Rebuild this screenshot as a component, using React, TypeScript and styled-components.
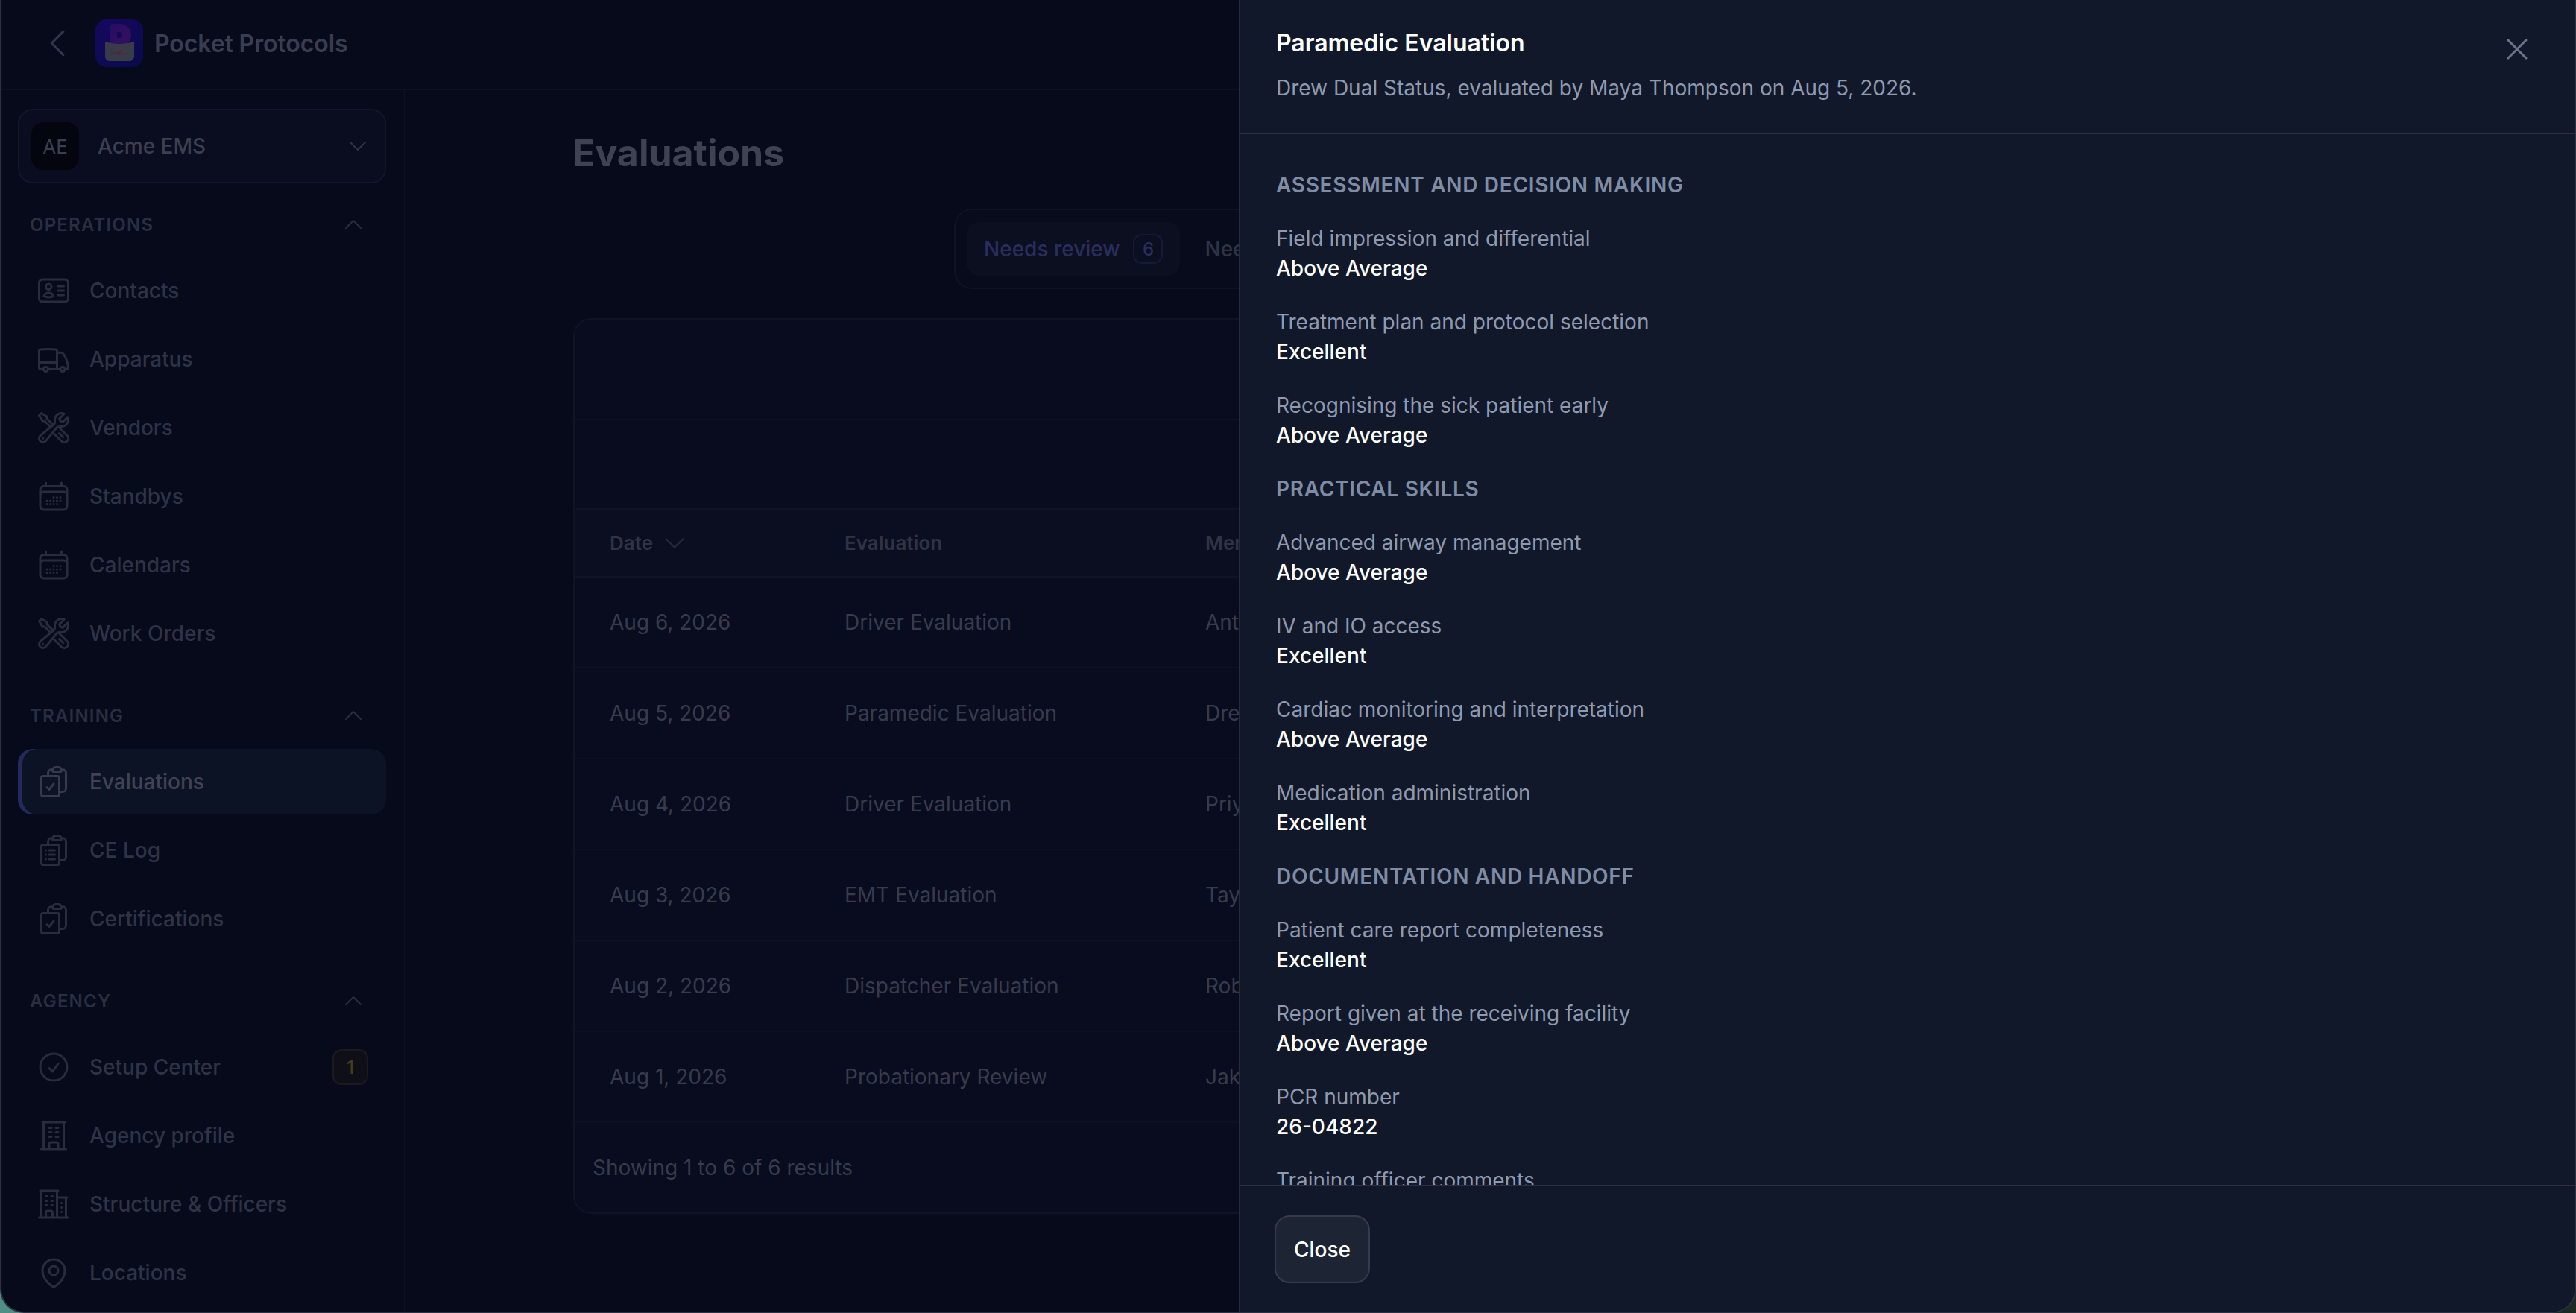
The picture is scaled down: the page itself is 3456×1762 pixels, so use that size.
import React from "react";
import styled, { createGlobalStyle } from "styled-components";
import {
  HiOutlineBuildingOffice,
  HiOutlineBuildingOffice2,
  HiOutlineCalendarDays,
  HiOutlineCheckCircle,
  HiOutlineChevronDown,
  HiOutlineChevronLeft,
  HiOutlineChevronUp,
  HiOutlineClipboardDocumentCheck,
  HiOutlineClipboardDocumentList,
  HiOutlineIdentification,
  HiOutlineMapPin,
  HiOutlineTruck,
  HiOutlineWrenchScrewdriver,
  HiOutlineXMark,
} from "react-icons/hi2";

const GlobalStyle = createGlobalStyle`
  html, body {
    margin: 0;
    padding: 0;
    background: linear-gradient(90deg, #4f8f84 0, #1c2a24 100%);
  }
  * { box-sizing: border-box; }
`;

const Window = styled.div`
  position: relative;
  width: 3456px;
  height: 1762px;
  display: flex;
  flex-direction: column;
  overflow: hidden;
  background: #060a1b;
  border: 2px solid #2d3144;
  border-top: none;
  border-radius: 0 0 32px 32px;
  font-family: Inter, "Liberation Sans", sans-serif;
`;

const TopBar = styled.header`
  height: 121px;
  flex: none;
  display: flex;
  align-items: center;
  padding: 0 0 3px 50px;
  border-bottom: 2px solid #0d1122;
`;
const BackIcon = styled(HiOutlineChevronLeft)`
  width: 50px;
  height: 50px;
  color: #32364a;
`;
const Logo = styled.svg`
  width: 64px;
  height: 64px;
  margin-left: 26px;
  flex: none;
`;
const Brand = styled.span`
  margin-left: 15px;
  font-size: 32px;
  font-weight: 600;
  letter-spacing: -0.1px;
  color: #3a3d4f;
`;

const Body = styled.div`
  flex: 1;
  display: flex;
  min-height: 0;
`;

const Sidebar = styled.aside`
  width: 542px;
  flex: none;
  padding: 25px 24px 0 22px;
  border-right: 2px solid #0d1122;
  overflow: hidden;
`;
const Tenant = styled.div`
  height: 100px;
  display: flex;
  align-items: center;
  padding: 0 20px 0 16px;
  border: 2px solid #12172a;
  border-radius: 20px;
  background: #090d1f;
`;
const TenantAvatar = styled.div`
  width: 64px;
  height: 64px;
  display: flex;
  align-items: center;
  justify-content: center;
  border-radius: 16px;
  background: #03050f;
  color: #3c3f50;
  font-size: 26px;
`;
const TenantName = styled.span`
  flex: 1;
  margin-left: 25px;
  font-size: 28px;
  font-weight: 500;
  color: #3c3f50;
`;
const TenantChevron = styled(HiOutlineChevronDown)`
  width: 32px;
  height: 32px;
  color: #2f3345;
`;
const Group = styled.section`
  margin-top: 48px;
  &:first-of-type { margin-top: 37px; }
`;
const GroupHead = styled.div`
  height: 36px;
  display: flex;
  align-items: center;
  justify-content: space-between;
  padding: 0 28px 0 16px;
  margin-bottom: 27px;
  font-size: 24px;
  font-weight: 600;
  letter-spacing: 1.2px;
  color: #2a2e40;
`;
const GroupChevron = styled(HiOutlineChevronUp)`
  width: 32px;
  height: 32px;
  color: #2a2e40;
`;
const NavList = styled.nav`
  display: flex;
  flex-direction: column;
  gap: 4px;
`;
const NavItem = styled.a<{ $active?: boolean }>`
  height: 88px;
  display: flex;
  align-items: center;
  gap: 24px;
  padding: 0 24px 0 24px;
  border-radius: 20px;
  font-size: 28px;
  font-weight: 500;
  color: ${(p) => (p.$active ? "#3f4354" : "#2f3345")};
  background: ${(p) => (p.$active ? "#0c1324" : "transparent")};
  box-shadow: ${(p) => (p.$active ? "inset 6px 0 0 #252a5c" : "none")};
  svg {
    width: 48px;
    height: 48px;
    flex: none;
    color: ${(p) => (p.$active ? "#363a4b" : "#282c3d")};
  }
`;
const NavLabel = styled.span`
  flex: 1;
`;
const NavBadge = styled.span`
  width: 48px;
  height: 48px;
  display: flex;
  align-items: center;
  justify-content: center;
  border: 2px solid #1c1a1e;
  border-radius: 12px;
  background: #0e0f17;
  color: #4a3b1c;
  font-size: 24px;
  font-weight: 500;
`;

const Main = styled.main`
  flex: 1;
  min-width: 0;
  padding: 52px 225px 0;
`;
const Title = styled.h1`
  margin: 0 0 0 -1px;
  font-size: 50px;
  line-height: 64px;
  font-weight: 700;
  color: #3f4252;
`;
const TabBar = styled.div`
  width: 1438px;
  height: 108px;
  margin: 43px auto 39px;
  display: flex;
  align-items: center;
  gap: 10px;
  padding: 0 15px;
  border: 2px solid #0e1224;
  border-radius: 24px;
  background: #070b1c;
`;
const Tab = styled.div<{ $active?: boolean }>`
  height: 72px;
  display: flex;
  align-items: center;
  gap: 18px;
  padding: 0 23px;
  border-radius: 16px;
  font-size: 28px;
  font-weight: 500;
  color: ${(p) => (p.$active ? "#2b2e5c" : "#2f3344")};
  background: ${(p) => (p.$active ? "#0b0f20" : "transparent")};
`;
const TabCount = styled.span`
  width: 40px;
  height: 40px;
  display: flex;
  align-items: center;
  justify-content: center;
  border: 2px solid #15193a;
  border-radius: 12px;
  font-size: 24px;
`;
const Card = styled.div`
  border: 2px solid #0f1325;
  border-radius: 24px;
  background: #080c1e;
  overflow: hidden;
`;
const ToolbarRow = styled.div<{ $height: number }>`
  height: ${(p) => p.$height}px;
  border-bottom: 2px solid #0f1325;
`;
// the member column stops where the drawer covers the table
const rowGrid = `
  display: grid;
  grid-template-columns: 315px 484px 46px;
  align-items: center;
  padding-left: 47px;
  white-space: nowrap;
`;
const HeadRow = styled.div`
  ${rowGrid}
  height: 91px;
  background: #0a0e20;
  border-bottom: 2px solid #0f1325;
  font-size: 26px;
  font-weight: 600;
  color: #2f3344;
`;
const HeadCell = styled.div`
  display: flex;
  align-items: center;
  gap: 11px;
  overflow: hidden;
  svg {
    width: 36px;
    height: 36px;
    color: #242838;
  }
`;
const Row = styled.div`
  ${rowGrid}
  height: 122px;
  border-bottom: 2px solid #0c1022;
  font-size: 28px;
  color: #383b4c;
`;
const Cell = styled.div`
  overflow: hidden;
`;
const CardFooter = styled.div`
  height: 120px;
  display: flex;
  align-items: center;
  padding-left: 24px;
  font-size: 28px;
  color: #383b4c;
`;

const Drawer = styled.aside`
  position: absolute;
  top: 0;
  right: 0;
  bottom: 0;
  width: 1792px;
  display: flex;
  flex-direction: column;
  background: #111829;
  border-left: 2px solid #272c3d;
`;
const DrawerHead = styled.header`
  position: relative;
  height: 180px;
  flex: none;
  padding: 34px 48px 0;
  border-bottom: 2px solid #2a3040;
`;
const DrawerTitle = styled.h2`
  margin: 0;
  font-size: 32px;
  line-height: 48px;
  font-weight: 600;
  color: #fff;
`;
const DrawerDesc = styled.p`
  margin: 16px 0 0;
  font-size: 28px;
  line-height: 40px;
  color: #8f9ab0;
`;
const CloseX = styled(HiOutlineXMark)`
  position: absolute;
  top: 42px;
  right: 53px;
  width: 48px;
  height: 48px;
  color: #6b7588;
`;
const DrawerBody = styled.div`
  flex: 1;
  min-height: 0;
  overflow: hidden;
  padding: 48px 48px 0;
  display: flex;
  flex-direction: column;
  gap: 32px;
`;
const SectionHead = styled.h3`
  margin: 0;
  font-size: 28px;
  line-height: 40px;
  font-weight: 600;
  letter-spacing: 0.7px;
  text-transform: uppercase;
  color: #7f8ca5;
`;
const Field = styled.div`
  flex: none;
`;
const FieldLabel = styled.div`
  font-size: 28px;
  line-height: 40px;
  color: #8f9ab0;
`;
const FieldValue = styled.div`
  font-size: 28px;
  line-height: 40px;
  font-weight: 500;
  color: #fff;
`;
const DrawerFoot = styled.footer`
  height: 170px;
  flex: none;
  padding: 39px 46px 0;
  border-top: 2px solid #2a3040;
`;
const CloseButton = styled.button`
  height: 91px;
  padding: 0 24px;
  border: 2px solid #353b4c;
  border-radius: 20px;
  background: #1d2434;
  color: #fff;
  font-family: inherit;
  font-size: 28px;
  font-weight: 500;
`;

const navGroups = [
  {
    title: "OPERATIONS",
    items: [
      { label: "Contacts", icon: <HiOutlineIdentification /> },
      { label: "Apparatus", icon: <HiOutlineTruck /> },
      { label: "Vendors", icon: <HiOutlineWrenchScrewdriver /> },
      { label: "Standbys", icon: <HiOutlineCalendarDays /> },
      { label: "Calendars", icon: <HiOutlineCalendarDays /> },
      { label: "Work Orders", icon: <HiOutlineWrenchScrewdriver /> },
    ],
  },
  {
    title: "TRAINING",
    items: [
      { label: "Evaluations", icon: <HiOutlineClipboardDocumentCheck />, active: true },
      { label: "CE Log", icon: <HiOutlineClipboardDocumentList /> },
      { label: "Certifications", icon: <HiOutlineClipboardDocumentCheck /> },
    ],
  },
  {
    title: "AGENCY",
    items: [
      { label: "Setup Center", icon: <HiOutlineCheckCircle />, badge: "1" },
      { label: "Agency profile", icon: <HiOutlineBuildingOffice /> },
      { label: "Structure & Officers", icon: <HiOutlineBuildingOffice2 /> },
      { label: "Locations", icon: <HiOutlineMapPin /> },
    ],
  },
];

const rows = [
  ["Aug 6, 2026", "Driver Evaluation", "Ant"],
  ["Aug 5, 2026", "Paramedic Evaluation", "Drew"],
  ["Aug 4, 2026", "Driver Evaluation", "Priy"],
  ["Aug 3, 2026", "EMT Evaluation", "Tay"],
  ["Aug 2, 2026", "Dispatcher Evaluation", "Rob"],
  ["Aug 1, 2026", "Probationary Review", "Jak"],
];

type Entry = { section: string } | { label: string; value?: string };

const entries: Entry[] = [
  { section: "Assessment and decision making" },
  { label: "Field impression and differential", value: "Above Average" },
  { label: "Treatment plan and protocol selection", value: "Excellent" },
  { label: "Recognising the sick patient early", value: "Above Average" },
  { section: "Practical skills" },
  { label: "Advanced airway management", value: "Above Average" },
  { label: "IV and IO access", value: "Excellent" },
  { label: "Cardiac monitoring and interpretation", value: "Above Average" },
  { label: "Medication administration", value: "Excellent" },
  { section: "Documentation and handoff" },
  { label: "Patient care report completeness", value: "Excellent" },
  { label: "Report given at the receiving facility", value: "Above Average" },
  { label: "PCR number", value: "26-04822" },
  { label: "Training officer comments" },
];

const PocketLogo = () => (
  <Logo viewBox="0 0 64 64">
    <defs>
      <linearGradient id="tile" x1="0" y1="0" x2="1" y2="1">
        <stop offset="0" stopColor="#15095f" />
        <stop offset="1" stopColor="#0a0a4c" />
      </linearGradient>
      <linearGradient id="letter" x1="0" y1="0" x2="1" y2="1">
        <stop offset="0" stopColor="#260d66" />
        <stop offset="1" stopColor="#37105c" />
      </linearGradient>
    </defs>
    <rect width="64" height="64" rx="15" fill="url(#tile)" />
    <path d="M19 11a5 5 0 0 1 5-5h9a15 15 0 0 1 0 30h-4V25h3a4 4 0 0 0 0-8h-3v17l-10 2z" fill="url(#letter)" />
    <path d="M13 30c12 4 26 4 39 0v20a6 6 0 0 1-6 6H19a6 6 0 0 1-6-6z" fill="#3a3b48" />
    <path d="M20 46h7l2-2 2 4 3-7 2 6 2-1h6" fill="none" stroke="#5a1c30" strokeWidth="1" />
  </Logo>
);

export default function App() {
  return (
    <>
      <GlobalStyle />
      <Window>
        <TopBar>
          <BackIcon />
          <PocketLogo />
          <Brand>Pocket Protocols</Brand>
        </TopBar>
        <Body>
          <Sidebar>
            <Tenant>
              <TenantAvatar>AE</TenantAvatar>
              <TenantName>Acme EMS</TenantName>
              <TenantChevron />
            </Tenant>
            {navGroups.map((group) => (
              <Group key={group.title}>
                <GroupHead>
                  {group.title}
                  <GroupChevron />
                </GroupHead>
                <NavList>
                  {group.items.map((item: any) => (
                    <NavItem key={item.label} $active={item.active}>
                      {item.icon}
                      <NavLabel>{item.label}</NavLabel>
                      {item.badge && <NavBadge>{item.badge}</NavBadge>}
                    </NavItem>
                  ))}
                </NavList>
              </Group>
            ))}
          </Sidebar>
          <Main>
            <Title>Evaluations</Title>
            <TabBar>
              <Tab $active>
                Needs review
                <TabCount>6</TabCount>
              </Tab>
              <Tab>Needs</Tab>
            </TabBar>
            <Card>
              <ToolbarRow $height={135} />
              <ToolbarRow $height={120} />
              <HeadRow>
                <HeadCell>
                  Date
                  <HiOutlineChevronDown />
                </HeadCell>
                <HeadCell>Evaluation</HeadCell>
                <HeadCell>Member</HeadCell>
              </HeadRow>
              {rows.map((row) => (
                <Row key={row[0]}>
                  <Cell>{row[0]}</Cell>
                  <Cell>{row[1]}</Cell>
                  <Cell>{row[2]}</Cell>
                </Row>
              ))}
              <CardFooter>Showing 1 to 6 of 6 results</CardFooter>
            </Card>
          </Main>
        </Body>
        <Drawer>
          <DrawerHead>
            <DrawerTitle>Paramedic Evaluation</DrawerTitle>
            <DrawerDesc>Drew Dual Status, evaluated by Maya Thompson on Aug 5, 2026.</DrawerDesc>
            <CloseX />
          </DrawerHead>
          <DrawerBody>
            {entries.map((entry) =>
              "section" in entry ? (
                <SectionHead key={entry.section}>{entry.section}</SectionHead>
              ) : (
                <Field key={entry.label}>
                  <FieldLabel>{entry.label}</FieldLabel>
                  {entry.value && <FieldValue>{entry.value}</FieldValue>}
                </Field>
              )
            )}
          </DrawerBody>
          <DrawerFoot>
            <CloseButton>Close</CloseButton>
          </DrawerFoot>
        </Drawer>
      </Window>
    </>
  );
}
